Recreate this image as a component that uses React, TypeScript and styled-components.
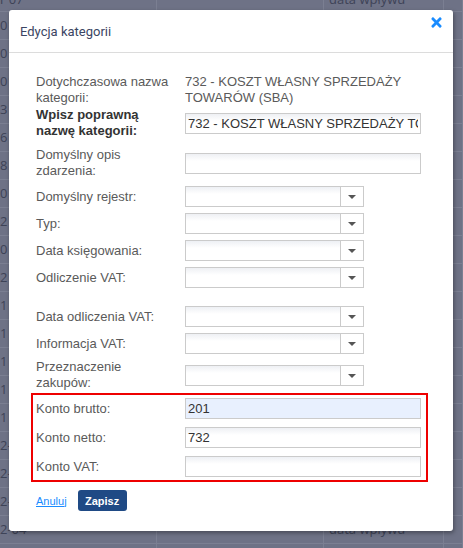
import { FaTimes } from 'react-icons/fa';
import styled, { createGlobalStyle } from 'styled-components';

const GlobalStyle = createGlobalStyle`
  html, body {
    margin: 0;
    padding: 0;
    width: 463px;
    height: 548px;
    overflow: hidden;
  }
  body {
    font-family: "Liberation Sans", Arial, sans-serif;
    background: #6e7286;
  }
`;

const Page = styled.div`
  position: relative;
  width: 463px;
  height: 548px;
  overflow: hidden;
  background: #6e7286;
`;

const BackTable = styled.div`
  display: flex;
  flex-direction: column;
  margin-top: -13px;
`;

const BackRow = styled.div<{ $h?: number }>`
  display: grid;
  grid-template-columns: 157px 167px 120px 19px;
  height: ${(p) => p.$h ?? 27}px;
  border-bottom: 1px solid #7b7f92;
  font-size: 13px;
  line-height: ${(p) => p.$h ?? 27}px;
  color: #3e4357;
`;

const BackCell = styled.div<{ $pad?: number }>`
  border-right: 1px solid #7b7f92;
  padding-left: ${(p) => p.$pad ?? 0}px;
  overflow: hidden;
  white-space: nowrap;
  font-family: "Open Sans", sans-serif;
`;

const Modal = styled.div`
  position: absolute;
  top: 10px;
  left: 9px;
  width: 444px;
  background: #fff;
  border-radius: 3px;
  box-shadow: 1px 2px 4px rgba(0, 0, 0, 0.35);
`;

const Header = styled.div`
  display: flex;
  justify-content: space-between;
  align-items: flex-start;
  height: 42px;
  border-bottom: 1px solid #dcdcdc;
  padding: 0 9px 0 11px;
`;

const Title = styled.h4`
  margin: 14px 0 0;
  font-family: Roboto, "Liberation Sans", sans-serif;
  font-weight: 400;
  font-size: 13px;
  line-height: 15px;
  color: #3b4563;
`;

const Close = styled.button`
  border: none;
  background: none;
  padding: 0;
  margin-top: 5px;
  color: #1a8cff;
  display: flex;
  cursor: pointer;
`;

const Body = styled.div`
  padding: 21px 32px 20px 27px;
`;

const Row = styled.div<{ $mt?: number }>`
  display: grid;
  grid-template-columns: 149px 236px;
  align-items: center;
  margin-top: ${(p) => p.$mt ?? 0}px;
  font-size: 13px;
  line-height: 16px;
  color: #5a5a5a;
`;

const Label = styled.div<{ $bold?: boolean }>`
  padding-right: 11px;
  font-weight: ${(p) => (p.$bold ? 700 : 400)};
  color: ${(p) => (p.$bold ? '#333' : '#5a5a5a')};
`;

const Value = styled.div`
  color: #5a5a5a;
`;

const TextInput = styled.input<{ $filled?: boolean }>`
  box-sizing: border-box;
  width: 236px;
  height: 21px;
  margin: 0;
  padding: 0 2px;
  border: 1px solid #cbcbcb;
  font-family: "Liberation Sans", Arial, sans-serif;
  font-size: 13px;
  color: #333;
  background: ${(p) =>
    p.$filled ? '#e8f0fe' : 'linear-gradient(#eef0f4, #ffffff 7px)'};
  outline: none;
`;

const SelectBox = styled.div`
  box-sizing: border-box;
  display: flex;
  width: 179px;
  height: 21px;
  border: 1px solid #cbcbcb;
  background: linear-gradient(#eef0f4, #ffffff 7px);
`;

const SelectValue = styled.div`
  flex: 1;
`;

const SelectArrow = styled.div`
  width: 22px;
  border-left: 1px solid #cbcbcb;
  display: flex;
  align-items: center;
  justify-content: center;
  background: #fff;

  &::after {
    content: '';
    border-left: 4px solid transparent;
    border-right: 4px solid transparent;
    border-top: 4px solid #555;
    margin-top: 1px;
  }
`;

const Highlight = styled.div`
  margin: 2px -7px 0 -5px;
  padding: 3px 5px 3px 3px;
  border: 2px solid #ee0000;
`;

const Footer = styled.div`
  display: flex;
  align-items: center;
  gap: 11px;
  margin-top: 8px;
`;

const CancelLink = styled.a`
  font-size: 11px;
  color: #1a8cff;
  text-decoration: underline;
  cursor: pointer;
`;

const SaveButton = styled.button`
  height: 21px;
  width: 49px;
  padding: 0;
  border: none;
  border-radius: 3px;
  background: #1f4a85;
  color: #fff;
  font-family: "Liberation Sans", Arial, sans-serif;
  font-weight: 700;
  font-size: 11px;
`;

const Select = () => (
  <SelectBox>
    <SelectValue />
    <SelectArrow />
  </SelectBox>
);

const backRows = [
  'r 07', '01-', '01-', '01-', '3', '6', '8', '0', '2', '0', '2',
  '1', '1', '1', '1', '1', '2-', '2-', '2-', '2-04', '',
];

const App = () => (
  <Page>
    <GlobalStyle />
    <BackTable>
      {backRows.map((t, i) => (
        <BackRow key={i} $h={i === 0 ? 24 : undefined}>
          <BackCell>{t}</BackCell>
          <BackCell />
          <BackCell $pad={5}>{i === 0 || i === 19 ? 'data wpływu' : ''}</BackCell>
          <BackCell />
        </BackRow>
      ))}
    </BackTable>
    <Modal>
      <Header>
        <Title>Edycja kategorii</Title>
        <Close aria-label="Zamknij">
          <FaTimes size={15} />
        </Close>
      </Header>
      <Body>
        <Row>
          <Label>Dotychczasowa nazwa kategorii:</Label>
          <Value>732 - KOSZT WŁASNY SPRZEDAŻY TOWARÓW (SBA)</Value>
        </Row>
        <Row $mt={1}>
          <Label $bold>Wpisz poprawną nazwę kategorii:</Label>
          <TextInput defaultValue="732 - KOSZT WŁASNY SPRZEDAŻY TOWARÓW (SBA)" />
        </Row>
        <Row $mt={8}>
          <Label>Domyślny opis zdarzenia:</Label>
          <TextInput />
        </Row>
        <Row $mt={7}>
          <Label>Domyślny rejestr:</Label>
          <Select />
        </Row>
        <Row $mt={6}>
          <Label>Typ:</Label>
          <Select />
        </Row>
        <Row $mt={6}>
          <Label>Data księgowania:</Label>
          <Select />
        </Row>
        <Row $mt={6}>
          <Label>Odliczenie VAT:</Label>
          <Select />
        </Row>
        <Row $mt={18}>
          <Label>Data odliczenia VAT:</Label>
          <Select />
        </Row>
        <Row $mt={6}>
          <Label>Informacja VAT:</Label>
          <Select />
        </Row>
        <Row $mt={5}>
          <Label>Przeznaczenie zakupów:</Label>
          <Select />
        </Row>
        <Highlight>
          <Row>
            <Label>Konto brutto:</Label>
            <TextInput $filled defaultValue="201" />
          </Row>
          <Row $mt={8}>
            <Label>Konto netto:</Label>
            <TextInput defaultValue="732" />
          </Row>
          <Row $mt={8}>
            <Label>Konto VAT:</Label>
            <TextInput />
          </Row>
        </Highlight>
        <Footer>
          <CancelLink>Anuluj</CancelLink>
          <SaveButton>Zapisz</SaveButton>
        </Footer>
      </Body>
    </Modal>
  </Page>
);

export default App;
